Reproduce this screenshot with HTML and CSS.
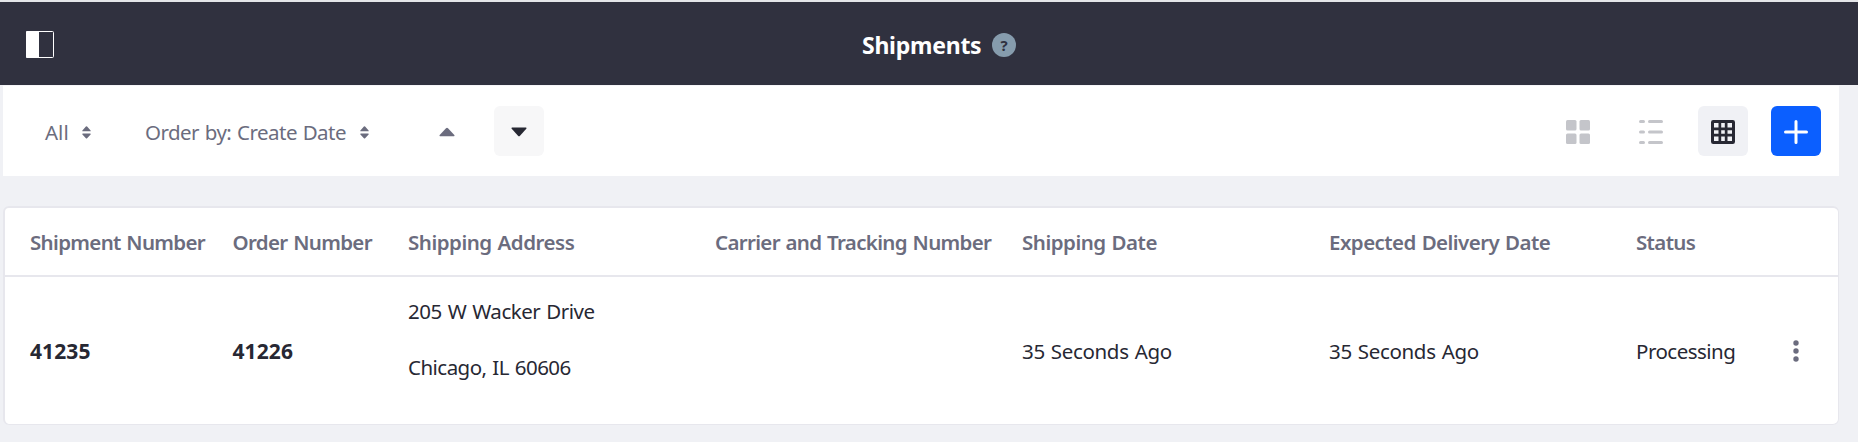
FILE: index.html
```html
<!DOCTYPE html>
<html lang="en">
<head>
<meta charset="utf-8">
<title>Shipments</title>
<link rel="stylesheet" href="styles.css">
</head>
<body>
<header class="topbar">
  <svg class="panel-icon" width="28" height="27" viewBox="0 0 28 27"><rect x=".5" y=".5" width="27" height="26" rx="1" fill="none" stroke="#fff"/><path d="M1 0h12v27H1a1 1 0 0 1-1-1V1a1 1 0 0 1 1-1z" fill="#fff"/></svg>
  <h1 class="title">Shipments</h1>
  <span class="help">?</span>
</header>
<nav class="toolbar">
  <a class="filter filter-all"><span class="t-all">All</span>
    <svg class="sort" width="9" height="13" viewBox="0 0 9 13"><path d="M.7 5.2Q0 5.2.4 4.4L3.9.5q.6-.6 1.2 0l3.5 3.9q.4.8-.3.8zM.7 7.6Q0 7.6.4 8.4l3.5 3.9q.6.6 1.2 0l3.5-3.9q.4-.8-.3-.8z"/></svg></a>
  <a class="filter filter-order"><span class="t-order">Order by: Create Date</span>
    <svg class="sort" width="9" height="13" viewBox="0 0 9 13"><path d="M.7 5.2Q0 5.2.4 4.4L3.9.5q.6-.6 1.2 0l3.5 3.9q.4.8-.3.8zM.7 7.6Q0 7.6.4 8.4l3.5 3.9q.6.6 1.2 0l3.5-3.9q.4-.8-.3-.8z"/></svg></a>
  <button class="btn asc"><svg width="16" height="10" viewBox="0 0 16 10"><path d="M1 9.2Q0 9 .7 8L7 1.2q1-1 2 0L15.300 8q.7 1-.3 1.200z" fill="#6b6c7e"/></svg></button>
  <button class="btn desc"><svg width="16" height="10" viewBox="0 0 16 10"><path d="M1 .5Q0 .7.7 1.700L7 8.700q1 1 2 0l6.300-7Q16 .7 15 .5z" fill="#272833"/></svg></button>
  <div class="views">
    <button class="btn"><svg width="24" height="24" viewBox="0 0 24 24" fill="#c4c5ca"><rect width="10.500" height="10.500" rx="1.500"/><rect x="13.500" width="10.500" height="10.500" rx="1.500"/><rect y="13.500" width="10.500" height="10.500" rx="1.500"/><rect x="13.500" y="13.500" width="10.500" height="10.500" rx="1.500"/></svg></button>
    <button class="btn"><svg width="24" height="24" viewBox="0 0 24 24" fill="#c4c5ca"><rect width="6" height="3" rx="1.500"/><rect x="9" width="15" height="3" rx="1.500"/><rect y="10.500" width="6" height="3" rx="1.500"/><rect x="9" y="10.500" width="15" height="3" rx="1.500"/><rect y="21" width="6" height="3" rx="1.500"/><rect x="9" y="21" width="15" height="3" rx="1.500"/></svg></button>
    <button class="btn active"><svg width="24" height="24" viewBox="0 0 24 24"><path fill="#272833" fill-rule="evenodd" d="M2.250 0h19.500A2.250 2.250 0 0 1 24 2.250v19.500A2.250 2.250 0 0 1 21.750 24H2.250A2.250 2.250 0 0 1 0 21.750V2.250A2.250 2.250 0 0 1 2.250 0zM3 3v4.500h4.500V3zm7.200 0v4.500h3.600V3zm6.300 0v4.500H21V3zM3 10.200v3.600h4.500v-3.600zm7.200 0v3.600h3.600v-3.600zm6.300 0v3.600H21v-3.600zM3 16.500V21h4.500v-4.500zm7.200 0V21h3.600v-4.500zm6.300 0V21H21v-4.500z"/></svg></button>
    <button class="btn add"><svg width="24" height="24" viewBox="0 0 24 24"><path d="M12 1.500v21M1.500 12h21" stroke="#fff" stroke-width="3" stroke-linecap="round"/></svg></button>
  </div>
</nav>
<main class="card">
  <div class="row head">
    <span class="shipment">Shipment Number</span><span class="order">Order Number</span><span class="shipping">Shipping Address</span><span class="carrier">Carrier and Tracking Number</span><span class="shipping">Shipping Date</span><span class="expected">Expected Delivery Date</span><span class="state">Status</span>
  </div>
  <div class="row body">
    <b>41235</b><b>41226</b>
    <div class="address"><p class="street">205 W Wacker Drive</p><p class="city">Chicago, IL 60606</p></div>
    <span></span><span class="ago">35 Seconds Ago</span><span class="ago">35 Seconds Ago</span><span class="status">Processing</span>
    <svg class="kebab" width="6" height="22" viewBox="0 0 6 22" fill="#6b6c7e"><circle cx="3" cy="3" r="2.700"/><circle cx="3" cy="11" r="2.700"/><circle cx="3" cy="19" r="2.700"/></svg>
  </div>
</main>
</body>
</html>
```
FILE: styles.css
```css
* { box-sizing: border-box; }
body { margin: 0; height: 442px; overflow: hidden; background: #f0f1f5; color: #272833; font: 20.5px/32px "Noto Sans", "Open Sans", sans-serif; white-space: nowrap; }
svg { display: block; flex: none; }
.topbar { height: 85px; border-top: 2px solid #e4e5e9; background: #30313f; display: flex; align-items: center; padding: 2px 0 0 26px; }
.title { margin: 0 0 0 808px; width: 118px; font-size: 23px; font-weight: 700; letter-spacing: -.25px; color: #fff; }
.help { margin: 1px 0 0 12px; width: 24px; height: 24px; border-radius: 50%; background: #869cad; color: #30313f; font-size: 15px; font-weight: 700; line-height: 24px; text-align: center; }
.toolbar { margin: 0 19px 0 3px; height: 91px; background: #fff; border-top: 1px solid #f5f5f8; display: flex; align-items: center; padding: 0 18px 0 42px; color: #6b6c7e; }
.filter { display: flex; align-items: center; padding-top: 2px; }
.filter-all { width: 100px; }
.t-all { width: 37px; }
.t-order { width: 215px; letter-spacing: -.54px; word-spacing: 1px; }
.sort { fill: #6b6c7e; }
.btn { width: 50px; height: 50px; border: 0; padding: 2px 0 0; border-radius: 6px; background: none; display: flex; align-items: center; justify-content: center; }
.asc { margin-left: 53px; }
.desc { margin-left: 22px; background: #f7f7f8; }
.views { margin-left: auto; display: grid; grid-template-columns: 73px 72px 73px 50px; }
.active { background: #f0f1f5; }
.add { background: #0b5fff; }
.card { margin: 30px 19px 0 3px; height: 219px; background: #fff; border: 2px solid #e7e7ed; border-right-width: 1px; border-bottom-width: 1px; border-radius: 6px; }
.row { display: grid; grid-template-columns: 202.500px 175.500px 307px 307px 307px 307px 156.500px 6px; padding-left: 25px; align-items: center; }
.head { height: 69px; padding-top: 1px; border-bottom: 2px solid #e7e7ed; color: #6b6c7e; font-weight: 600; word-spacing: 1px; }
.shipment, .order, .carrier { letter-spacing: -.67px; }
.shipping { letter-spacing: -.48px; }
.expected { letter-spacing: -.54px; }
.state { letter-spacing: -.65px; }
.body { height: 148px; word-spacing: 1px; }
.body b { font-size: 21px; letter-spacing: .1px; }
.address { padding-bottom: 24px; }
.address p { margin: 0; }
.address .street { margin-bottom: 24px; letter-spacing: -.46px; }
.city { letter-spacing: -.53px; }
.ago { letter-spacing: -.33px; }
.status { letter-spacing: -.51px; }
```
